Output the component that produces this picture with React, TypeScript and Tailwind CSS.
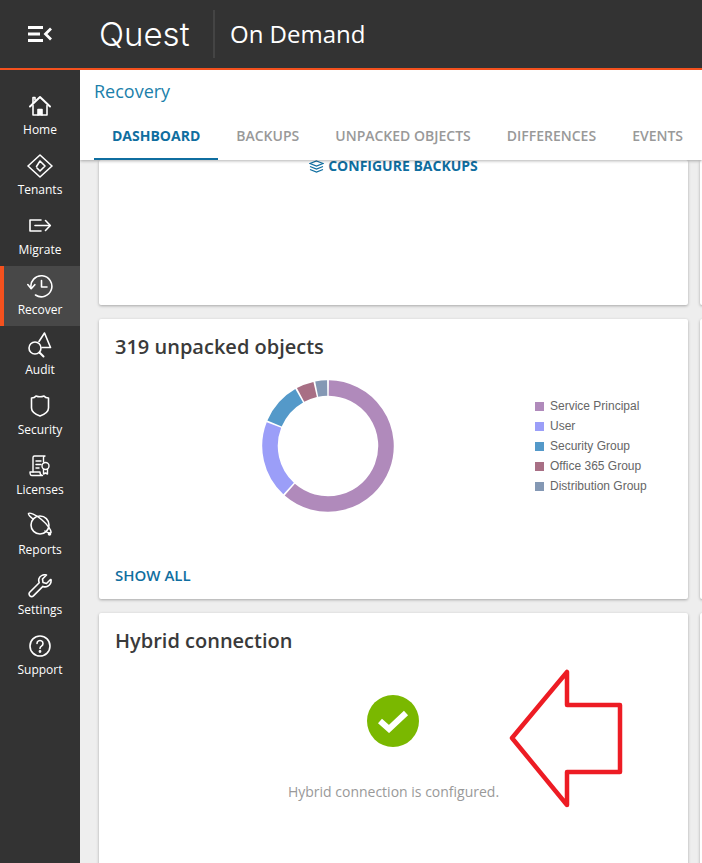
import React from "react";

const S = { fill: "none", stroke: "currentColor", strokeWidth: 1.6, strokeLinecap: "round" as const, strokeLinejoin: "round" as const };

const icons: Record<string, React.ReactNode> = {
  Home: (<svg width="24" height="24" viewBox="0 0 24 24" {...S}><path d="M2 12.500 12 3l10 9.500" strokeWidth="2" /><path d="M5 3.500h2V6M5 3.500V9" /><path d="M5 11.500V21h14v-9.500" /><path d="M10 21v-5.500h4V21" fill="currentColor" /></svg>),
  Tenants: (<svg width="26" height="24" viewBox="0 0 26 24" {...S}><path d="M13 1 25 12 13 23 1 12Z" /><path d="M9.500 12.500 13 7l5 5-5 5-3-3" /></svg>),
  Migrate: (<svg width="24" height="24" viewBox="0 0 24 24" {...S}><path d="M13 6H2v11h11" /><path d="M7 11.500h15" /><path d="m17.500 6.500 4.800 5-4.800 5" /></svg>),
  Recover: (<svg width="26" height="24" viewBox="0 0 26 24" {...S}><path d="M4 14a10.500 10.500 0 1 1 4.500 7" /><path d="m0.800 10.500 3.400 4.200 3.600-4" /><path d="M14.500 6.500V13h5.500" /></svg>),
  Audit: (<svg width="26" height="26" viewBox="0 0 26 26" {...S}><circle cx="8" cy="16" r="6" /><path d="m12.500 20.500 4 4" strokeWidth="2" /><path d="M12 9.500 17.500 1l6 14.500H15" /></svg>),
  Security: (<svg width="20" height="24" viewBox="0 0 20 24" {...S}><path d="M1.500 4c3 0 3.500-.4 4.500-2 2.500 1 5.500 1 8 0 1 1.600 1.500 2 4.500 2v10c0 4-4.500 6.500-8.500 8-4-1.500-8.500-4-8.500-8Z" /></svg>),
  Licenses: (<svg width="24" height="24" viewBox="0 0 24 24" {...S} strokeWidth="1.400"><path d="M5 18V3.500C5 2.500 5.500 2 6.500 2H17c-1 0-1.500.5-1.500 1.500V8" /><path d="M8 7h5M8 10.500h5M8 14h3" /><path d="M2 18h10c0 2 .8 3.500 2.500 3.500H4c-1.500 0-2-1.500-2-3.500Z" /><circle cx="17.500" cy="12" r="3.500" /><path d="M15.500 15.500V20l2-1 2 1v-4.500" /></svg>),
  Reports: (<svg width="26" height="26" viewBox="0 0 26 26" {...S}><circle cx="13" cy="13" r="9" /><path d="M6 7C3 4.500 1 2.500 1.500 1.500c1-1.200 7 1 13 6s10 11 9.500 13c-.4 1.200-3 .5-6-1.500" strokeWidth="1.500" /><circle cx="22.500" cy="22" r="1" fill="currentColor" /></svg>),
  Settings: (<svg width="24" height="24" viewBox="0 0 24 24" {...S}><path d="M22.500 5.500 18.500 9.500 15 8.500 14.500 5 18.500 1c-3-.8-6.500.6-7.500 3.500-.5 1.500-.3 3 .2 4.200L1.700 18.200c-1 1-.8 2.700.2 3.700s2.500 1 3.500 0l9.500-9.500c1.500.6 3.200.6 4.700-.2 2.500-1.300 3.800-4 3.400-6.700Z" /></svg>),
  Support: (<svg width="24" height="24" viewBox="0 0 24 24" {...S}><circle cx="12" cy="12" r="10" /><path d="M9 9.500a3 3 0 1 1 4.500 2.600c-1 .6-1.500 1.200-1.500 2.400" /><circle cx="12" cy="17.500" r=".6" fill="currentColor" /></svg>),
};

const nav = ["Home", "Tenants", "Migrate", "Recover", "Audit", "Security", "Licenses", "Reports", "Settings", "Support"];
const tabs = ["Dashboard", "Backups", "Unpacked objects", "Differences", "Events"];
const legend = [
  ["Service Principal", "bg-[#b08abb]"],
  ["User", "bg-[#9b9ef8]"],
  ["Security Group", "bg-[#5499c9]"],
  ["Office 365 Group", "bg-[#a86f85]"],
  ["Distribution Group", "bg-[#8498b4]"],
];

function arc(a0: number, a1: number) {
  const r = 58;
  const p = (a: number) => {
    const t = (a * Math.PI) / 180;
    return `${(66 + r * Math.sin(t)).toFixed(2)} ${(66 - r * Math.cos(t)).toFixed(2)}`;
  };
  return `M${p(a0)}A${r} ${r} 0 ${a1 - a0 > 180 ? 1 : 0} 1 ${p(a1)}`;
}

function Donut() {
  const segs: [number, number, string][] = [
    [0, 222, "#b08abb"],
    [222, 292, "#9b9ef8"],
    [292, 331, "#5499c9"],
    [331, 348, "#a86f85"],
    [348, 360, "#8498b4"],
  ];
  return (
    <svg width="132" height="132" viewBox="0 0 132 132">
      {segs.map(([a, b, c]) => (
        <path key={c} d={arc(a + 0.8, b - 0.8)} fill="none" stroke={c} strokeWidth="15.500" />
      ))}
    </svg>
  );
}

const card = "rounded-[2px] bg-white shadow-[0_1px_3px_rgba(0,0,0,0.3)]";

export default function App() {
  return (
    <div className="relative h-[863px] w-[702px] overflow-hidden bg-[#eeeeee] font-['Open_Sans',sans-serif]">
      <header className="flex h-[70px] items-center border-b-2 border-[#f4511e] bg-[#333333] text-white">
        <div className="flex w-[80px] justify-center">
          <svg width="26" height="18" viewBox="0 0 26 18" fill="none" stroke="white" strokeWidth="3">
            <path d="M1 2.500h15M1 9h12M1 15.500h15" />
            <path d="M24 3.500 18.500 9l5.500 5.500" strokeWidth="2.800" />
          </svg>
        </div>
        <span className="ml-[19px] w-[114px] font-['Inter',sans-serif] text-[33px] leading-none font-light">Quest</span>
        <div className="h-[48px] w-[2px] bg-[#444444]" />
        <span className="ml-[15px] text-[24px] leading-none">On Demand</span>
      </header>
      <div className="flex h-[793px]">
        <nav className="w-[80px] shrink-0 bg-[#333333] pt-4 text-white">
          {nav.map((n) => (
            <div key={n} className={`flex h-[60px] flex-col items-center border-l-4 pr-1 ${n === "Recover" ? "border-[#f4511e] bg-[#484848]" : "border-transparent"}`}>
              <div className="flex h-[32px] items-end justify-center">{icons[n]}</div>
              <span className="mt-[2px] text-[12px] leading-[20px]">{n}</span>
            </div>
          ))}
        </nav>
        <main className="flex min-w-0 flex-1 flex-col overflow-hidden">
          <div className="relative z-10 h-[90px] shrink-0 bg-white shadow-[0_1px_3px_rgba(0,0,0,0.3)]">
            <div className="pt-[8px] pl-[14px] text-[18px] leading-[26px] text-[#1b7fab]">Recovery</div>
            <div className="mt-[11px] flex pl-[14px]">
              {tabs.map((t, i) => (
                <div key={t} className={`h-[45px] border-b-2 px-[18px] pt-[11px] text-[14px] leading-[20px] whitespace-nowrap uppercase ${i === 0 ? "border-[#0f6ea0] font-bold text-[#0f6ea0]" : "border-transparent font-semibold text-[#999999]"}`}>{t}</div>
              ))}
            </div>
          </div>
          <div className="flex gap-[12px] pl-[19px]">
            <div className="flex w-[589px] shrink-0 flex-col gap-[14px]">
              <section className={`h-[145px] ${card}`}>
                <div className="flex h-[12px] items-center justify-center gap-[4px] text-[14px] font-bold text-[#0f6ea0] uppercase">
                  <svg width="15" height="13" viewBox="0 0 15 13" fill="none" stroke="currentColor" strokeWidth="1.300">
                    <path d="M7.500 1 14 3.500 7.500 6 1 3.500Z" />
                    <path d="m1 6.500 6.500 2.500L14 6.500M1 9.500 7.500 12 14 9.500" />
                  </svg>
                  <span className="leading-[12px]">Configure backups</span>
                </div>
              </section>
              <section className={`flex h-[280px] flex-col px-4 ${card}`}>
                <h2 className="pt-[14px] text-[20px] leading-[28px] font-semibold text-[#3a3a3a]">319 unpacked objects</h2>
                <div className="relative mt-[19px] flex h-[132px]">
                  <div className="ml-[147px]"><Donut /></div>
                  <ul className="ml-[141px] flex flex-col pt-[16px] font-['Liberation_Sans',sans-serif] text-[12px] leading-[20px] text-[#666666]">
                    {legend.map(([l, c]) => (
                      <li key={l} className="flex items-center gap-[6px] whitespace-nowrap"><span className={`h-[9px] w-[9px] ${c}`} />{l}</li>
                    ))}
                  </ul>
                </div>
                <div className="mt-[53px] text-[15px] leading-[20px] font-semibold text-[#0f6ea0] uppercase">Show all</div>
              </section>
              <section className={`h-[260px] px-4 ${card}`}>
                <h2 className="pt-[14px] text-[20px] leading-[28px] font-semibold text-[#3a3a3a]">Hybrid connection</h2>
                <div className="mt-[40px] flex flex-col items-center">
                  <div className="mr-[2px] flex h-[52px] w-[52px] items-center justify-center rounded-full bg-[#7ab800]">
                    <svg width="32" height="24" viewBox="0 0 32 24" fill="none" stroke="white" strokeWidth="6"><path d="m3 12 9 8L29 4" /></svg>
                  </div>
                  <p className="mt-[35px] text-[14px] leading-[20px] text-[#999999]">Hybrid connection is configured.</p>
                </div>
              </section>
            </div>
            <div className="flex w-[589px] shrink-0 flex-col gap-[14px]">
              <section className={`h-[145px] ${card}`} />
              <section className={`h-[280px] ${card}`} />
              <section className={`h-[260px] ${card}`} />
            </div>
          </div>
        </main>
      </div>
      <svg className="absolute top-[668px] left-[508px]" width="118" height="142" viewBox="508 668 118 142">
        <polygon points="512,738 567,672 567,705 620,705 620,772 567,772 567,805" fill="none" stroke="#ed1c24" strokeWidth="4.500" strokeLinejoin="round" />
      </svg>
    </div>
  );
}
